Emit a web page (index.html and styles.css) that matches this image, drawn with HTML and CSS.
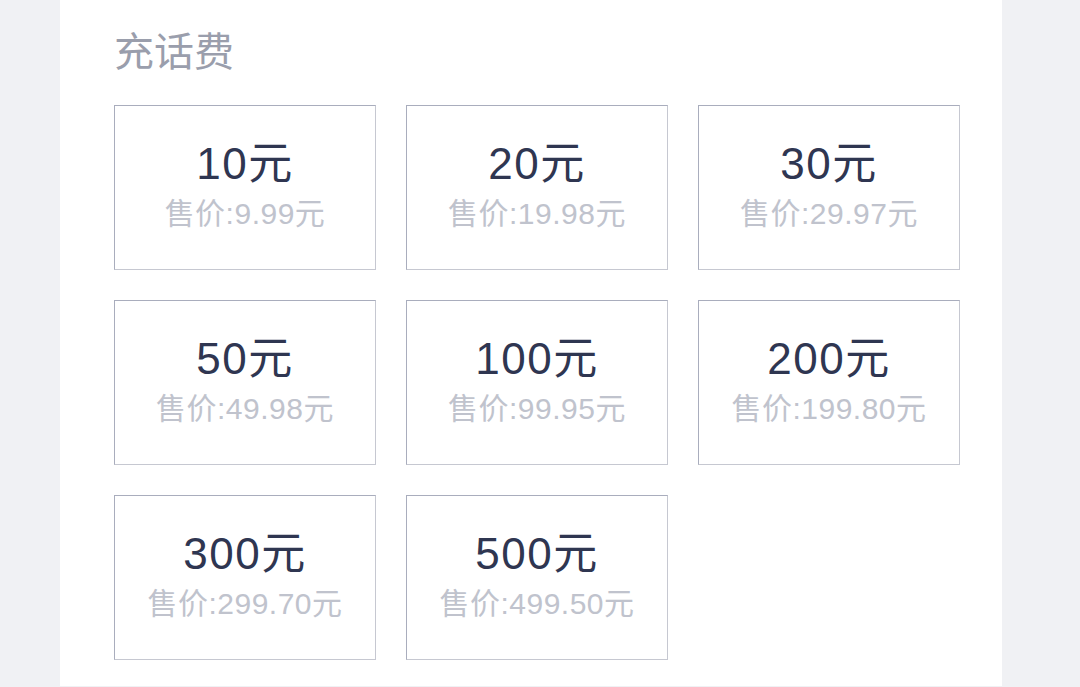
FILE: index.html
```html
<!DOCTYPE html>
<html lang="zh-CN">
<head>
<meta charset="utf-8">
<title>充话费</title>
<link rel="stylesheet" href="styles.css">
</head>
<body>
<main class="panel">
  <h1 class="title">充话费</h1>
  <div class="grid">
    <div class="card"><div class="amount">10元</div><div class="price">售价:9.99元</div></div>
    <div class="card"><div class="amount">20元</div><div class="price">售价:19.98元</div></div>
    <div class="card"><div class="amount">30元</div><div class="price">售价:29.97元</div></div>
    <div class="card"><div class="amount">50元</div><div class="price">售价:49.98元</div></div>
    <div class="card"><div class="amount">100元</div><div class="price">售价:99.95元</div></div>
    <div class="card"><div class="amount">200元</div><div class="price">售价:199.80元</div></div>
    <div class="card"><div class="amount">300元</div><div class="price">售价:299.70元</div></div>
    <div class="card"><div class="amount">500元</div><div class="price">售价:499.50元</div></div>
  </div>
</main>
</body>
</html>
```

FILE: styles.css
```css
html, body {
  margin: 0;
  padding: 0;
}
body {
  background: #f0f1f4;
  font-family: "Liberation Sans", "Noto Sans CJK SC", sans-serif;
  height: 687px;
  overflow: hidden;
}
.panel {
  margin-left: 60px;
  width: 942px;
  height: 686px;
  box-sizing: border-box;
  background: #ffffff;
  padding: 29px 0 0 54px;
}
.title {
  margin: 0;
  font-family: "Noto Sans CJK SC", sans-serif;
  font-size: 40px;
  line-height: 40px;
  font-weight: 400;
  color: #9a9eac;
}
.grid {
  margin-top: 36px;
  display: grid;
  grid-template-columns: repeat(3, 262px);
  grid-auto-rows: 165px;
  gap: 30px;
}
.card {
  box-sizing: border-box;
  border: 1px solid #b9bcc9;
  border-top-color: #a9adbd;
  border-left-color: #a9adbd;
  border-right-color: #c6c8d1;
  border-bottom-color: #c6c8d1;
  padding-top: 33px;
  display: flex;
  flex-direction: column;
  align-items: center;
}
.amount {
  font-size: 44px;
  line-height: 50px;
  letter-spacing: 1.5px;
  color: #2f3651;
}
.price {
  margin-top: 5px;
  font-size: 30px;
  line-height: 40px;
  letter-spacing: 0.5px;
  color: #c0c3cd;
}
```
